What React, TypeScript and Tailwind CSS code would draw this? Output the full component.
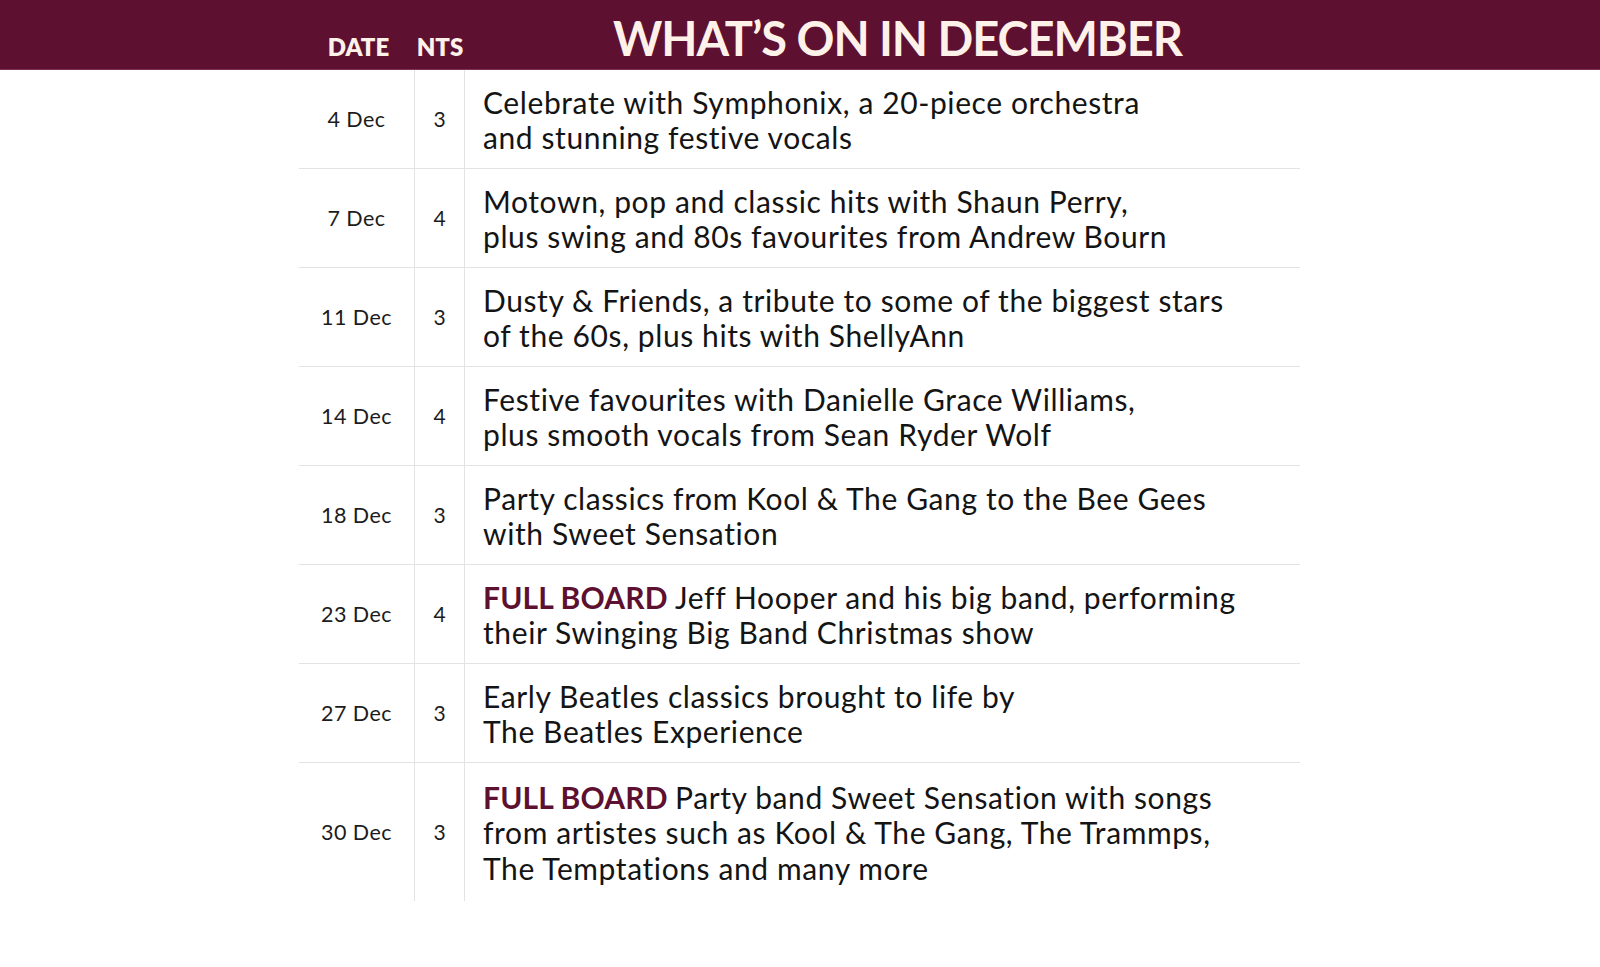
import React from "react";

type Row = { date: string; nts: string; board?: boolean; lines: string[] };

const rows: Row[] = [
  { date: "4 Dec", nts: "3", lines: ["Celebrate with Symphonix, a 20-piece orchestra", "and stunning festive vocals"] },
  { date: "7 Dec", nts: "4", lines: ["Motown, pop and classic hits with Shaun Perry,", "plus swing and 80s favourites from Andrew Bourn"] },
  { date: "11 Dec", nts: "3", lines: ["Dusty & Friends, a tribute to some of the biggest stars", "of the 60s, plus hits with ShellyAnn"] },
  { date: "14 Dec", nts: "4", lines: ["Festive favourites with Danielle Grace Williams,", "plus smooth vocals from Sean Ryder Wolf"] },
  { date: "18 Dec", nts: "3", lines: ["Party classics from Kool & The Gang to the Bee Gees", "with Sweet Sensation"] },
  { date: "23 Dec", nts: "4", board: true, lines: ["Jeff Hooper and his big band, performing", "their Swinging Big Band Christmas show"] },
  { date: "27 Dec", nts: "3", lines: ["Early Beatles classics brought to life by", "The Beatles Experience"] },
  { date: "30 Dec", nts: "3", board: true, lines: ["Party band Sweet Sensation with songs", "from artistes such as Kool & The Gang, The Trammps,", "The Temptations and many more"] },
];

export default function App() {
  return (
    <div className="w-[1600px] h-[967px] bg-white overflow-hidden" style={{ fontFamily: "Lato, 'Open Sans', sans-serif" }}>
      <header className="h-[70px] bg-[#5d1030] border-b border-[#7a3450] flex items-end text-[#fdf1e9]">
        <div className="w-[299px] shrink-0" />
        <div className="w-[116px] shrink-0 text-center text-[24px] font-extrabold leading-none pb-[10px] pl-[3px]">DATE</div>
        <div className="w-[50px] shrink-0 text-center text-[24px] font-extrabold leading-none pb-[10px]">NTS</div>
        <div className="pl-[148px] text-[47px] font-bold leading-none pb-[7px] tracking-[-0.022em] whitespace-nowrap">WHAT’S ON IN DECEMBER</div>
      </header>
      <div className="ml-[299px] w-[1001px]">
        {rows.map((r, i) => {
          const last = i === rows.length - 1;
          return (
            <div
              key={r.date}
              className={`grid grid-cols-[116px_50px_1fr] ${last ? "h-[138px]" : "h-[99px] border-b border-[#e3e3e3]"}`}
            >
              <div className="flex items-center justify-center border-r border-[#e3e3e3] text-[21.5px] tracking-[0.02em] text-[#1c1c1c]">{r.date}</div>
              <div className="flex items-center justify-center border-r border-[#e3e3e3] text-[21px] text-[#1c1c1c]">{r.nts}</div>
              <div className="flex flex-col justify-center pl-[18px] pt-[2px] text-[30px] leading-[35.5px] text-[#141414] whitespace-nowrap tracking-[0.02em]">
                {r.lines.map((l, j) => (
                  <div key={j}>
                    {j === 0 && r.board ? <span className="font-bold text-[#5d1030] tracking-[0.005em]">FULL BOARD </span> : null}
                    {l}
                  </div>
                ))}
              </div>
            </div>
          );
        })}
      </div>
    </div>
  );
}
